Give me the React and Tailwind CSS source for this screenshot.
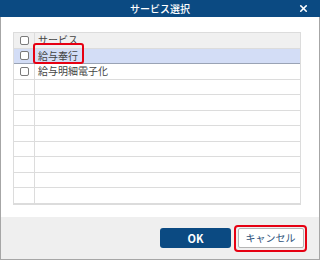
import { X } from 'lucide-react';

const rows = [
  { label: 'サービス', kind: 'header' },
  { label: '給与奉行', kind: 'selected' },
  { label: '給与明細電子化', kind: 'normal' },
  ...Array.from({ length: 8 }, () => ({ label: '', kind: 'empty' })),
];

function Checkbox() {
  return (
    <span className="block w-[9px] h-[9px] rounded-[2px] border border-[#7a7a7a] bg-white" />
  );
}

export default function App() {
  return (
    <div
      className="w-[320px] h-[260px] flex flex-col bg-white"
      style={{ fontFamily: '"Noto Sans CJK JP", "Noto Sans", sans-serif' }}
    >
      {/* Title bar */}
      <div className="h-[17px] bg-[#0b4a82] flex items-center justify-center relative">
        <span className="text-[10px] leading-none text-white font-medium">サービス選択</span>
        <X className="absolute right-[11px] top-[3px] w-[11px] h-[11px] text-white" strokeWidth={3.5} />
      </div>

      {/* Body */}
      <div className="flex-1 flex flex-col border-x border-b border-[#a6a6a6]">
        <div className="flex-1 pt-[15px] pl-[12px]">
          <div className="relative w-[288px] border border-[#dcdcdc]">
            {rows.map((row, i) => (
              <div
                key={i}
                className={
                  'flex h-[15.5px] border-b ' +
                  (row.kind === 'header'
                    ? 'bg-[#f0f0f0] border-[#dcdcdc]'
                    : row.kind === 'selected'
                    ? 'bg-[#d3ddf6] border-[#9aa3b5]'
                    : 'bg-white border-[#dcdcdc]')
                }
              >
                <div className="w-[21px] flex items-center justify-center border-r border-[#dcdcdc]">
                  {row.kind !== 'empty' && <Checkbox />}
                </div>
                <div className="flex-1 flex items-center pl-[3px] text-[10px] leading-none text-[#444444]">
                  {row.label}
                </div>
              </div>
            ))}
            {/* annotation on 給与奉行 */}
            <div className="absolute left-[19px] top-[10px] w-[51px] h-[21px] border-[2.5px] border-[#e60012] rounded-[3px]" />
          </div>
        </div>

        {/* Footer */}
        <div className="h-[42px] bg-[#efefef] flex items-center justify-end pr-[12px] gap-[3px]">
          <button className="w-[71px] h-[20px] rounded-[3px] bg-[#0b4a82] text-white text-[11px] font-semibold leading-none">
            OK
          </button>
          <div className="p-[1.5px] border-[2.5px] border-[#e60012] rounded-[4px]">
            <button className="block w-[66px] h-[20px] rounded-[2px] bg-white border border-[#b5b5b5] text-[10px] leading-none text-[#2b4f7a]">
              キャンセル
            </button>
          </div>
        </div>
      </div>
    </div>
  );
}
